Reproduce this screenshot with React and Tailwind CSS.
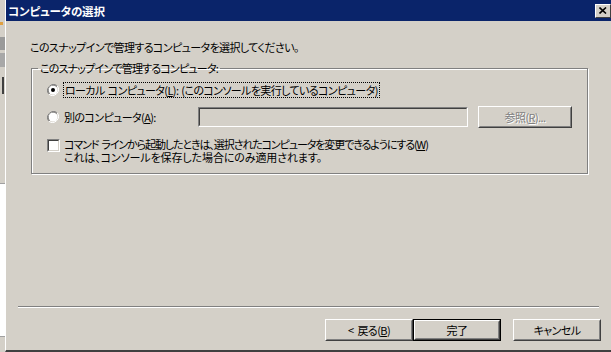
import React from "react";

const font = "font-['Noto_Sans_CJK_JP',sans-serif] [font-feature-settings:'palt'] text-[11px] leading-[14px] tracking-[-0.6px]";

function Radio({ checked }) {
  return (
    <svg width="12" height="12" viewBox="0 0 12 12" className="shrink-0">
      <path d="M10.2 1.8A6 6 0 0 0 1.8 10.2" fill="none" stroke="#808080" strokeWidth="1" />
      <path d="M9.5 2.5A5 5 0 0 0 2.5 9.5" fill="none" stroke="#404040" strokeWidth="1" />
      <path d="M1.8 10.2A6 6 0 0 0 10.2 1.8" fill="none" stroke="#ffffff" strokeWidth="1" />
      <circle cx="6" cy="6" r="4.5" fill="#ffffff" />
      {checked && <circle cx="6" cy="6" r="2" fill="#000000" />}
    </svg>
  );
}

function RaisedButton({ children, isDefault, disabled, className }) {
  return (
    <div className={`${isDefault ? "border border-black" : ""} ${className}`}>
      <div className="h-full w-full border border-t-white border-l-white border-r-[#404040] border-b-[#404040]">
        <div
          className={`h-full w-full flex items-center justify-center border border-t-[#d4d0c8] border-l-[#d4d0c8] border-r-[#808080] border-b-[#808080] ${
            disabled ? "text-[#808080] [text-shadow:1px_1px_0_#ffffff]" : "text-black"
          }`}
        >
          {children}
        </div>
      </div>
    </div>
  );
}

export default function App() {
  return (
    <div className={`w-[611px] h-[352px] flex overflow-hidden bg-[#d4d0c8] text-black ${font}`}>
      {/* window behind the dialog */}
      <div className="w-[5px] shrink-0 flex flex-col bg-[#d4d0c8]">
        <div className="h-[22px]" />
        <div className="h-[3px] w-[3px] bg-[#e0a040]" />
        <div className="h-[12px]" />
        <div className="h-[13px] bg-[#9a9a9a]" />
        <div className="h-[3px]" />
        <div className="h-[14px] bg-[#a8a8a8]" />
        <div className="h-[10px]" />
        <div className="h-[17px] w-[2px] ml-[2px] bg-[#404040]" />
        <div className="flex-1" />
        <div className="h-[154px] bg-white border-t border-[#a0a0a0] border-b" />
        <div className="h-[15px]" />
      </div>

      {/* dialog */}
      <div className="flex-1 flex flex-col border-l border-white border-b-2 border-b-[#404040]">
        <div className="h-[21px] shrink-0 bg-[#0a246a] flex items-center justify-between pl-[2px] pr-[3px]">
          <span className="text-white font-bold text-[11.5px] tracking-[-0.2px]">コンピュータの選択</span>
          <div className="w-[16px] h-[14px] bg-[#d4d0c8] border border-t-white border-l-white border-r-[#404040] border-b-[#404040] flex items-center justify-center">
            <svg width="8" height="7" viewBox="0 0 8 7">
              <path d="M0.5 0.5L7 6.5M7 0.5L0.5 6.5" stroke="#000" strokeWidth="1.6" />
            </svg>
          </div>
        </div>

        <div className="flex-1 flex flex-col">
          <div className="pt-[19px] pl-[24px]">このスナップインで管理するコンピュータを選択してください。</div>

          <fieldset className="mt-[7px] ml-[25px] mr-[26px] border border-[#808080] shadow-[inset_1px_1px_0_#ffffff,1px_1px_0_#ffffff] px-[15px] pb-[9px]">
            <legend className="ml-[-9px] px-[2px] tracking-[-0.8px]">このスナップインで管理するコンピュータ:</legend>

            <div className="mt-[7px] h-[16px] flex items-center">
              <Radio checked />
              <span className="ml-[4px] border border-dotted border-black px-[1px] leading-[14px]">
                ローカル<span className="ml-[3px]">コンピュータ(<span className="underline">L</span>):</span>
                <span className="ml-[3px]">(このコンソールを実行しているコンピュータ)</span>
              </span>
            </div>

            <div className="mt-[8px] h-[21px] flex items-center">
              <Radio />
              <span className="ml-[5px] w-[134px]">
                別のコンピュータ(<span className="underline">A</span>):
              </span>
              <div className="w-[270px] h-[20px] border border-t-[#808080] border-l-[#808080] border-r-white border-b-white">
                <div className="h-full w-full border border-t-[#404040] border-l-[#404040] border-r-[#d4d0c8] border-b-[#d4d0c8]" />
              </div>
              <RaisedButton disabled className="ml-[10px] w-[94px] h-[22px]">
                参照(<span className="underline">R</span>)...
              </RaisedButton>
            </div>

            <div className="mt-[11px] flex items-start">
              <div className="mt-[1px] w-[13px] h-[13px] shrink-0 border border-t-[#808080] border-l-[#808080] border-r-white border-b-white">
                <div className="h-full w-full bg-white border border-t-[#404040] border-l-[#404040] border-r-[#d4d0c8] border-b-[#d4d0c8]" />
              </div>
              <div className="ml-[4px] leading-[13px]">
                <div className="tracking-[-1.1px]">
                  コマンド<span className="ml-[3px]">ラインから起動したときは、選択されたコンピュータを変更できるようにする(<span className="underline">W</span>)</span>
                </div>
                <div className="tracking-[-0.1px]">これは、コンソールを保存した場合にのみ適用されます。</div>
              </div>
            </div>
          </fieldset>

          <div className="flex-1" />

          <div className="ml-[12px] mr-[15px] border-t border-t-[#808080] border-b border-b-white" />

          <div className="mt-[11px] pb-[9px] pr-[13px] flex justify-end">
            <RaisedButton className="w-[88px] h-[22px]">
              &lt;<span className="ml-[4px]">戻る(<span className="underline">B</span>)</span>
            </RaisedButton>
            <RaisedButton isDefault className="w-[88px] h-[22px]">
              完了
            </RaisedButton>
            <RaisedButton className="ml-[12px] w-[88px] h-[22px]">キャンセル</RaisedButton>
          </div>
        </div>
      </div>
    </div>
  );
}
